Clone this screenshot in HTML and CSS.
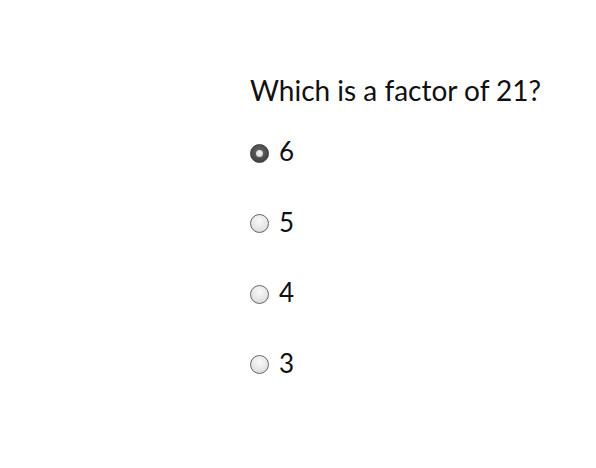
FILE: index.html
```html
<!DOCTYPE html>
<html lang="en">
<head>
  <meta charset="UTF-8">
  <title>Question</title>
  <link rel="stylesheet" href="styles.css">
</head>
<body>
  <div class="quiz">
    <p class="question">Which is a factor of 21?</p>
    <div class="options">
      <label class="option"><span class="radio checked"></span><span class="answer">6</span></label>
      <label class="option"><span class="radio"></span><span class="answer">5</span></label>
      <label class="option"><span class="radio"></span><span class="answer">4</span></label>
      <label class="option"><span class="radio"></span><span class="answer">3</span></label>
    </div>
  </div>
</body>
</html>
```

FILE: styles.css
```css
body {
  margin: 0;
  background-color: #fff;
  color: #111;
  font-family: Lato, "Open Sans", sans-serif;
}

.quiz {
  padding: 72px 0 0 250px;
}

.question {
  margin: 0;
  font-size: 28px;
  line-height: 36px;
}

.options {
  display: flex;
  flex-direction: column;
  gap: 40.5px;
  margin-top: 28px;
}

.option {
  display: flex;
  align-items: center;
  gap: 10px;
  height: 30px;
}

.radio {
  width: 17px;
  height: 17px;
  border-radius: 50%;
  border: 1.5px solid #666;
  background: radial-gradient(circle at 50% 35%, #fafafa 0%, #e6e6e6 55%, #cfcfcf 100%);
  margin-top: 4px;
  position: relative;
}

.radio.checked {
  border-color: #3a3a3a;
  background: radial-gradient(circle at 50% 40%, #6a6a6a 0%, #444 70%, #333 100%);
}

.radio.checked::after {
  content: "";
  position: absolute;
  left: 5px;
  top: 5px;
  width: 7px;
  height: 7px;
  border-radius: 50%;
  background: radial-gradient(circle at 50% 40%, #f4f4f4 0%, #c8c8c8 100%);
}

.answer {
  font-size: 26px;
  line-height: 30px;
}
```
